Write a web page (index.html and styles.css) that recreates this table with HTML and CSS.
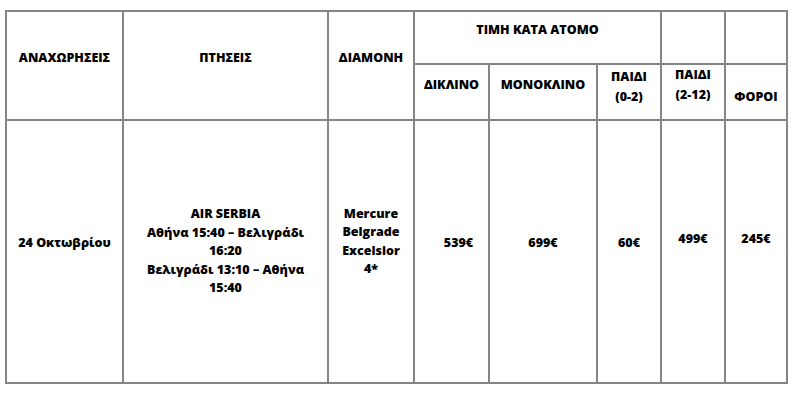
FILE: index.html
```html
<!DOCTYPE html>
<html lang="el">
<head>
<meta charset="utf-8">
<title>Τιμές</title>
<link rel="stylesheet" href="styles.css">
</head>
<body>
<table class="price-table">
  <colgroup>
    <col class="c1"><col class="c2"><col class="c3"><col class="c4"><col class="c5"><col class="c6"><col class="c7"><col class="c8">
  </colgroup>
  <tr class="r1">
    <th rowspan="2" class="head-main">ΑΝΑΧΩΡΗΣΕΙΣ</th>
    <th rowspan="2" class="head-main">ΠΤΗΣΕΙΣ</th>
    <th rowspan="2" class="head-main">ΔΙΑΜΟΝΗ</th>
    <th colspan="3" class="head-group">ΤΙΜΗ ΚΑΤΑ ΑΤΟΜΟ</th>
    <th></th>
    <th></th>
  </tr>
  <tr class="r2">
    <th class="head-sub">ΔΙΚΛΙΝΟ</th>
    <th class="head-sub">ΜΟΝΟΚΛΙΝΟ</th>
    <th class="head-sub two">ΠΑΙΔΙ<br>(0-2)</th>
    <th class="head-sub two up">ΠΑΙΔΙ<br>(2-12)</th>
    <th class="head-sub low">ΦΟΡΟΙ</th>
  </tr>
  <tr class="r3">
    <td class="date">24 Οκτωβρίου</td>
    <td class="flights">AIR SERBIA<br>Αθήνα 15:40 – Βελιγράδι<br>16:20<br>Βελιγράδι 13:10 – Αθήνα<br>15:40</td>
    <td class="hotel">Mercure<br>Belgrade<br>Excelsior<br>4*</td>
    <td class="price shift">539€</td>
    <td class="price">699€</td>
    <td class="price">60€</td>
    <td class="price up">499€</td>
    <td class="price up">245€</td>
  </tr>
</table>
</body>
</html>
```
FILE: styles.css
```css
html, body {
  margin: 0;
  padding: 0;
  background: #ffffff;
}
body {
  padding: 10px 0 0 5px;
  font-family: "Open Sans", "Noto Sans", sans-serif;
  font-weight: 800;
  font-size: 12.5px;
  color: #000;
}
.price-table {
  border-collapse: collapse;
  table-layout: fixed;
  width: 783px;
}
.c1 { width: 117px; }
.c2 { width: 205px; }
.c3 { width: 86px; }
.c4 { width: 75px; }
.c5 { width: 108px; }
.c6 { width: 64px; }
.c7 { width: 64px; }
.c8 { width: 62px; }
.price-table th,
.price-table td {
  border: 2px solid #858585;
  padding: 0;
  text-align: center;
  vertical-align: middle;
  font-weight: 800;
  line-height: 18.5px;
}
.r1 { height: 53px; }
.r2 { height: 56px; }
.r3 { height: 263px; }
.head-main { padding-bottom: 14px !important; }
.head-group { padding-bottom: 14px !important; }
.head-sub { padding-bottom: 14px !important; }
.head-sub.two { line-height: 20px; padding-bottom: 10px !important; }
.head-sub.two.up { padding-bottom: 14px !important; }
.head-sub.low { padding-top: 10px !important; padding-bottom: 0 !important; }
.date { padding-bottom: 16px !important; }
.hotel { padding-bottom: 20px !important; }
.price { padding-bottom: 16px !important; }
.price.up { padding-bottom: 25px !important; }
.price.shift { padding-left: 14px !important; }
```
